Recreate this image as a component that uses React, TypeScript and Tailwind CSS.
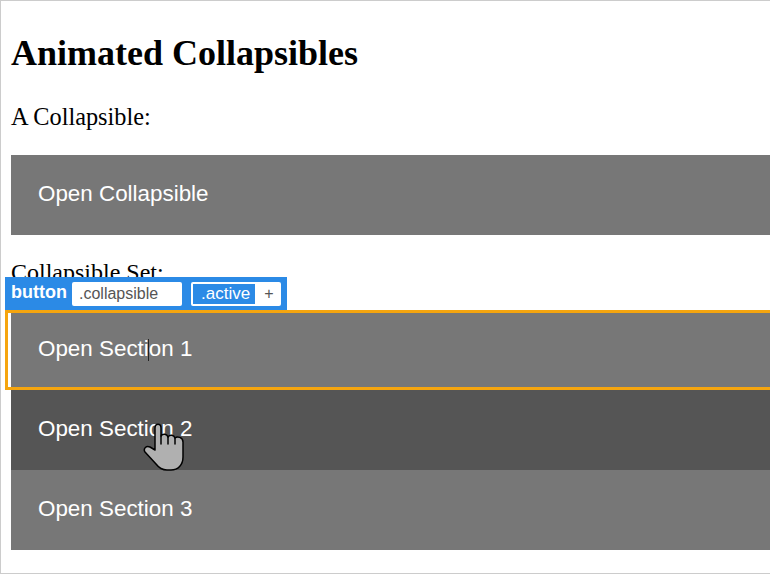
const Collapsible = ({ label, className }: { label: string; className: string }) => {
  return (
    <button className={`block h-20 w-[800px] pb-[2px] pl-[27px] text-left text-[22.4px] leading-none text-white font-['Liberation_Sans',sans-serif] ${className}`}>
      {label}
    </button>
  );
};

const HandCursor = () => {
  return (
    <svg
      className="absolute left-[142px] top-[420px] h-[50px] w-[44px]"
      viewBox="0 0 44 50"
      fill="none"
    >
      <path
        d="M12 29 V7 C12 2 18 2 18 7 V15 C20 12 24 13 25 16 C27 13 31 14 32 17 C34 15 40 16 40 21 V36 C40 44 35 49 28 49 H24 C19 49 16 47 13 43 L2 31 C0 28 3 24 7 26 Z"
        fill="#b0b0b0"
        stroke="#000"
        strokeWidth="1.5"
        strokeLinejoin="round"
      />
      <path d="M18 15 V23 M25 16 V23 M32 17 V23" stroke="#000" strokeWidth="1.5" strokeLinecap="round" />
    </svg>
  );
};

const Toolbar = () => {
  return (
    <div className="absolute left-[4px] top-[276px] flex h-[33px] w-[282px] items-center bg-[#2b8ae6] pl-[6px] font-['Liberation_Sans',sans-serif]">
      <span className="w-[61px] pb-[2px] text-[18px] font-bold text-white">button</span>
      <span className="flex h-[24px] w-[110px] items-center rounded-[2px] bg-white pt-[1px] pl-[7px] text-[16px] text-[#555]">
        .collapsible
      </span>
      <span className="ml-[9px] flex h-[24px] w-[66px] items-center rounded-l-[2px] border-2 border-white bg-[#2b8ae6] pt-[1px] pl-[8px] text-[17px] text-white">
        .active
      </span>
      <span className="flex h-[24px] w-[24px] items-center justify-center rounded-r-[2px] bg-white text-[16px] text-[#555]">
        +
      </span>
    </div>
  );
};

const App = () => {
  return (
    <div className="relative h-[574px] w-[770px] overflow-hidden border-y border-l border-[#cccccc] bg-white pl-[10px] font-['Liberation_Serif',serif] text-black">
      <h2 className="pt-[34px] text-[36px] leading-[37px] font-bold">Animated Collapsibles</h2>
      <p className="mt-[31px] text-[24.3px] leading-[28px]">A Collapsible:</p>
      <div className="mt-[24px]">
        <Collapsible label="Open Collapsible" className="bg-[#777777]" />
      </div>
      <p className="mt-[23px] text-[24px] leading-[28px]">Collapsible Set:</p>
      <div className="mt-[24px]">
        <Collapsible label="Open Section 1" className="bg-[#777777]" />
        <Collapsible label="Open Section 2" className="bg-[#555555]" />
        <Collapsible label="Open Section 3" className="bg-[#777777]" />
      </div>

      <Toolbar />
      <div className="absolute left-[4px] top-[309px] h-[80px] w-[790px] border-[3px] border-[#f5a50f]" />
      <div className="absolute left-[147px] top-[338px] h-[22px] w-px bg-[#222]" />
      <HandCursor />
    </div>
  );
};

export default App;
